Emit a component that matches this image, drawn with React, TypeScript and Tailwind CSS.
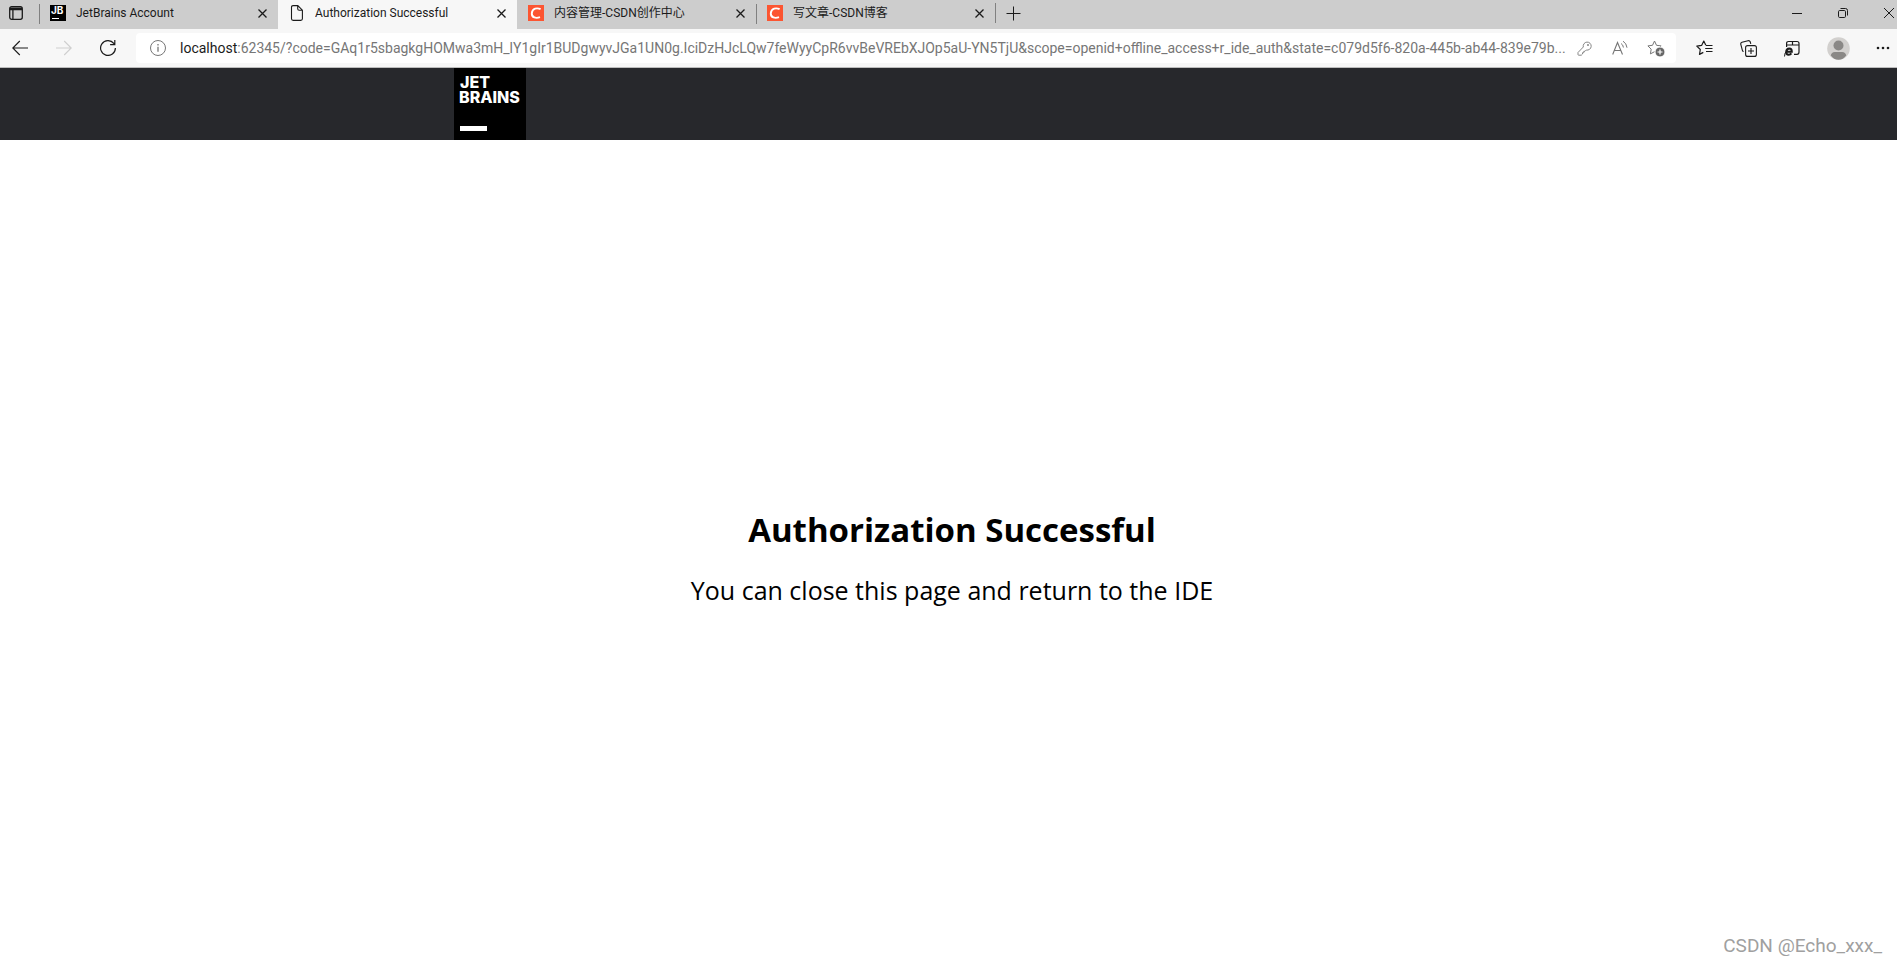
import React, { useState } from 'react';

const UI_FONT = "font-['Open_Sans','Noto_Sans_CJK_SC',sans-serif]";
const CHROME_FONT = "font-[Roboto,'Noto_Sans_CJK_SC',sans-serif]";

type TabIcon = 'jetbrains' | 'page' | 'csdn';

interface Tab {
  id: number;
  title: string;
  icon: TabIcon;
}

const tabs: Tab[] = [
  { id: 1, title: 'JetBrains Account', icon: 'jetbrains' },
  { id: 2, title: 'Authorization Successful', icon: 'page' },
  { id: 3, title: '内容管理-CSDN创作中心', icon: 'csdn' },
  { id: 4, title: '写文章-CSDN博客', icon: 'csdn' },
];

const ADDRESS =
  ':62345/?code=GAq1r5sbagkgHOMwa3mH_lY1gIr1BUDgwyvJGa1UN0g.IciDzHJcLQw7feWyyCpR6vvBeVREbXJOp5aU-YN5TjU&scope=openid+offline_access+r_ide_auth&state=c079d5f6-820a-445b-ab44-839e79b...';

const Favicon: React.FC<{ icon: TabIcon }> = ({ icon }) => {
  if (icon === 'jetbrains') {
    return (
      <svg width="16" height="16" viewBox="0 0 16 16" className="shrink-0">
        <rect width="16" height="16" fill="#000" />
        <text x="1" y="9" fill="#fff" fontSize="10" fontWeight="700" fontFamily="Inter, sans-serif">JB</text>
        <rect x="2" y="13" width="7" height="1" fill="#fff" />
      </svg>
    );
  }
  if (icon === 'csdn') {
    return (
      <svg width="16" height="16" viewBox="0 0 16 16" className="shrink-0">
        <rect width="16" height="16" fill="#fc5531" />
        <path d="M12.600 4.200C9.400 2.600 4.300 3 3.800 8.200c-.3 4.600 4.300 5.400 8.200 4" fill="none" stroke="#fff" strokeWidth="1.900" />
      </svg>
    );
  }
  return (
    <svg width="16" height="16" viewBox="0 0 16 16" fill="none" stroke="#1b1b1b" strokeWidth="1.1" className="shrink-0">
      <path d="M4.100.6h4.700L13.400 5.200v8.600q0 1.600-1.600 1.600H4.100q-1.600 0-1.600-1.600V2.200Q2.500.6 4.100.6M8.700.8v3q0 1.500 1.500 1.500h3" />
    </svg>
  );
};

// Strip with the tabs and the window controls
const TabStrip: React.FC = () => {
  const [activeTab, setActiveTab] = useState(2);

  return (
    <div className={`flex h-[29px] bg-[#cdcdcd] ${CHROME_FONT}`}>
      <button aria-label="Tab actions" className="flex w-[39px] items-center pl-[9px] pb-[3px]">
        <svg width="14" height="14" viewBox="0 0 14 14" fill="none" stroke="#1b1b1b" strokeWidth="1.3">
          <rect x=".7" y=".7" width="12.600" height="12.600" rx="2" />
          <path d="M1 2.200h12M1 3.500h12M3.900 3.500V13" />
        </svg>
      </button>
      {tabs.map((tab, index) => {
        const active = tab.id === activeTab;
        const divider = !active && tabs[index - 1]?.id !== activeTab;
        return (
          <div
            key={tab.id}
            className={`relative flex w-[239px] items-center gap-[10px] pb-[3px] pl-[11px] pr-2 ${active ? 'bg-[#f7f7f7]' : ''}`}
          >
            {divider && <span className="absolute left-0 top-1 h-5 w-px bg-[#808080]" />}
            <Favicon icon={tab.icon} />
            <button
              className="min-w-0 flex-1 truncate text-left text-[12px] leading-[18px] text-[#1b1b1b]"
              onClick={() => setActiveTab(tab.id)}
            >
              {tab.title}
            </button>
            <button aria-label={`Close ${tab.title}`} className="flex size-4 items-center justify-center">
              <svg width="9" height="9" viewBox="0 0 9 9" stroke="#1b1b1b" strokeWidth="1.300">
                <path d="M.5.5l8 8M8.500.5l-8 8" />
              </svg>
            </button>
          </div>
        );
      })}
      <div className="flex items-center pb-[3px]">
        <span className="h-5 w-px bg-[#808080]" />
        <button aria-label="New tab" className="flex w-[34px] items-center justify-center">
          <svg width="15" height="15" viewBox="0 0 15 15" stroke="#1b1b1b" strokeWidth="1">
            <path d="M7.500.5v14M.5 7.500h14" />
          </svg>
        </button>
      </div>
      <div className="ml-auto flex pb-[3px]">
        <button aria-label="Minimize" className="flex w-[46px] items-center justify-center">
          <svg width="10" height="10" viewBox="0 0 10 10" stroke="#1b1b1b"><path d="M0 5.500h10" /></svg>
        </button>
        <button aria-label="Restore" className="flex w-[46px] items-center justify-center">
          <svg width="10" height="10" viewBox="0 0 10 10" fill="none" stroke="#1b1b1b">
            <rect x=".5" y="2.500" width="7" height="7" rx="1.200" />
            <path d="M2.500.5h5q2 0 2 2v5" />
          </svg>
        </button>
        <button aria-label="Close window" className="flex w-[31px] items-center justify-end pr-[3px]">
          <svg width="10" height="10" viewBox="0 0 10 10" stroke="#1b1b1b"><path d="M0 0l10 10M10 0L0 10" /></svg>
        </button>
      </div>
    </div>
  );
};

const STAR = 'M7.500 1l2 4.300 4.600.6-3.300 3.300.8 4.700-4.100-2.200-4.100 2.200.8-4.700L.9 5.900l4.600-.6z';

const Toolbar: React.FC = () => {
  const [address, setAddress] = useState(ADDRESS);

  return (
    <div className={`flex h-[39px] items-center border-b border-[#bdbdbd] bg-[#f7f7f7] ${CHROME_FONT}`}>
      <div className="flex shrink-0 gap-1">
        <button aria-label="Back" className="flex w-10 justify-center">
          <svg width="16" height="16" viewBox="0 0 16 16" fill="none" stroke="#1b1b1b" strokeWidth="1.1">
            <path d="M16 8H.8M7.800 1L.8 8l7 7" />
          </svg>
        </button>
        <button aria-label="Forward" disabled className="flex w-10 justify-center">
          <svg width="16" height="16" viewBox="0 0 16 16" fill="none" stroke="#cfcfcf" strokeWidth="1.1">
            <path d="M0 8h15.200M8.200 1l7 7-7 7" />
          </svg>
        </button>
        <button aria-label="Refresh" className="flex w-10 justify-center">
          <svg width="16" height="16" viewBox="0 0 16 16" fill="none" stroke="#1b1b1b" strokeWidth="1.200">
            <path d="M15.400 8A7.400 7.400 0 1 1 13.800 3.400l.8 1.100M14.800 0v4.700H10.100" />
          </svg>
        </button>
      </div>

      {/* Address bar */}
      <div className="ml-2 flex h-[30px] min-w-0 flex-1 items-center rounded bg-white pl-[14px] pr-[2px] text-[14px] leading-[20px]">
        <button aria-label="View site information" className="mr-[14px] shrink-0">
          <svg width="16" height="16" viewBox="0 0 16 16" fill="none" stroke="#767676">
            <circle cx="8" cy="8" r="7.500" />
            <path d="M8 6.800v5M8 4v1.400" strokeWidth="1.300" />
          </svg>
        </button>
        <label htmlFor="address" className="text-[#1b1b1b]">localhost</label>
        <input
          id="address"
          className="min-w-0 flex-1 bg-transparent text-[#767676] outline-none"
          value={address}
          onChange={(e) => setAddress(e.target.value)}
        />
        <button aria-label="Saved passwords" className="flex w-9 shrink-0 justify-center">
          <svg width="15" height="15" viewBox="0 0 15 15" fill="none" stroke="#868686">
            <path d="M6.300 6a4 4 0 1 1 3 3L8 10.300H6.800v1.400H5.500V13L4.300 14.200H1.600Q1 14.200 1 13.500v-2z" strokeLinejoin="round" />
            <circle cx="11" cy="4" r=".6" fill="#868686" />
          </svg>
        </button>
        <button aria-label="Read aloud" className="flex w-9 shrink-0 justify-center">
          <svg width="16" height="16" viewBox="0 0 16 16" fill="none" stroke="#767676">
            <path d="M.7 14.500L5.500 2.500l5 12M2.400 10.500h6.400" strokeWidth="1.100" />
            <path d="M9 3.500q2.200 1.200 2.400 4M11 1.200q3.500 2 4 6.500" />
          </svg>
        </button>
        <button aria-label="Add to favorites" className="flex w-9 shrink-0 justify-center">
          <svg width="18" height="17" viewBox="0 0 18 17" fill="none" stroke="#767676">
            <path d={STAR} strokeLinejoin="round" />
            <circle cx="13" cy="12" r="5" fill="#666" stroke="#fff" />
            <path d="M13 9.500v5M10.500 12h5" stroke="#fff" strokeWidth="1.200" />
          </svg>
        </button>
      </div>

      <div className="ml-[6px] flex shrink-0 items-center">
        <button aria-label="Favorites" className="flex w-11 justify-center">
          <svg width="17" height="16" viewBox="0 0 17 16" fill="none" stroke="#1b1b1b" strokeWidth="1.200">
            <path d="M9.800 5.300L7.800 1 5.600 5.400l-4.800.7 3.500 3.400-.8 4.900 3.800-2" strokeLinejoin="round" />
            <path d="M10 5.500h6.500M9.200 8.500h7.300M10 11.500h6.500" />
          </svg>
        </button>
        <button aria-label="Collections" className="flex w-11 justify-center">
          <svg width="17" height="17" viewBox="0 0 17 17" fill="none" stroke="#1b1b1b" strokeWidth="1.100">
            <path d="M3.600 11.500Q2.700 11.400 2.400 10.300L.8 4.300Q.4 2.700 2 2.200L8 .7q1.600-.4 2.200 1.100l.6 2" />
            <rect x="5.600" y="5.600" width="10.800" height="10.800" rx="2" />
            <path d="M11 8v6M8 11h6" />
          </svg>
        </button>
        <button aria-label="Internet Explorer mode" className="flex w-11 justify-center">
          <svg width="16" height="17" viewBox="0 0 16 17" fill="none" stroke="#1b1b1b" strokeWidth="1.200">
            <path d="M2.600 7V3.500q0-2 2-2H13q2 0 2 2V12q0 2.300-2 2.300h-3M2.600 5H15M8.500 1.500V5" />
            <path d="M2.500 11.800h5.300q0-3.200-2.500-3.200-3 .1-3.100 3.500 0 2.600 2.300 2.700 1.800.1 2.900-1.400" strokeWidth="2" />
            <path d="M.5 16.500Q0 13 4 9.500" strokeWidth="1" />
          </svg>
        </button>
        <button aria-label="Profile" className="flex w-12 justify-center">
          <svg width="23" height="23" viewBox="0 0 23 23">
            <circle cx="11.500" cy="11.500" r="11.300" fill="#d2d0ce" />
            <circle cx="11.500" cy="8.500" r="5" fill="#8a8886" />
            <path d="M3.800 18.500q.6-3.500 4-3.500h7.400q3.400 0 4 3.500-3 4.200-7.700 4.200t-7.700-4.200" fill="#8a8886" />
          </svg>
        </button>
        <button aria-label="Settings and more" className="ml-[7px] flex w-7 justify-center">
          <svg width="14" height="4" viewBox="0 0 14 4" fill="#1b1b1b">
            <circle cx="2" cy="2" r="1.300" />
            <circle cx="7" cy="2" r="1.300" />
            <circle cx="12" cy="2" r="1.300" />
          </svg>
        </button>
      </div>
    </div>
  );
};

const JetBrainsLogo: React.FC = () => (
  <svg width="72" height="72" viewBox="0 0 72 72" role="img" aria-label="JetBrains">
    <rect width="72" height="72" fill="#000" />
    <text fill="#fff" fontFamily="Inter, sans-serif" fontWeight="800" fontSize="16">
      <tspan x="6" y="20">JET</tspan>
      <tspan x="5" y="35">BRAINS</tspan>
    </text>
    <rect x="6" y="58" width="27" height="5" fill="#fff" />
  </svg>
);

const App: React.FC = () => {
  return (
    <div className={`flex min-h-screen flex-col bg-white ${UI_FONT}`}>
      <TabStrip />
      <Toolbar />

      {/* Page header */}
      <header className="bg-[#27282c]">
        <div className="mx-auto max-w-[989px]">
          <JetBrainsLogo />
        </div>
      </header>

      <main className="relative flex flex-1 flex-col items-center justify-center pl-[7px] pt-[10px] text-center text-black">
        <h1 className="text-[33px] font-bold leading-[48px]">Authorization Successful</h1>
        <p className="mt-[18px] text-[25px] leading-[36px]">You can close this page and return to the IDE</p>
        <span className="absolute bottom-[6px] right-[15px] font-[Roboto,sans-serif] text-[19px] leading-[24px] text-[#a0a0a0]">
          CSDN @Echo_xxx_
        </span>
      </main>
    </div>
  );
};

export default App;
